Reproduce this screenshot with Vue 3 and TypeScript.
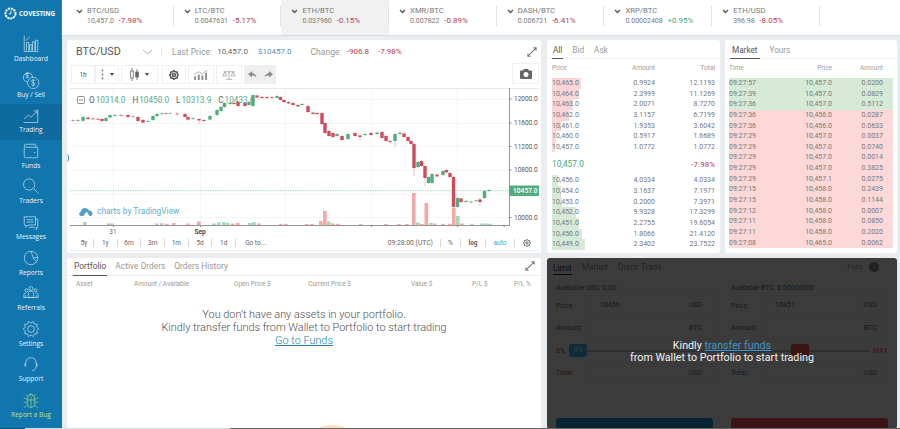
<template>
  <div class="app">
    <aside class="sidebar">
      <div class="logo">
        <svg width="13" height="13" viewBox="0 0 16 16" fill="none" stroke="#fff">
          <circle cx="8" cy="8" r="6.2" stroke-width="2.4" stroke-dasharray="2.6 1" />
          <path d="M8.6 4.8v3.6H5.8" stroke-width="1.1" />
        </svg>
        <span>COVESTING</span>
      </div>
      <a v-for="item in nav" :key="item.label" class="nav-item" :class="{ active: item.active, bug: item.bug }">
        <svg width="18" height="18" viewBox="0 0 24 24" fill="none" stroke="currentColor" stroke-width=".8">
          <path :d="item.d" />
        </svg>
        <span>{{ item.label }}</span>
      </a>
    </aside>

    <div class="main">
      <header class="tickers">
        <div v-for="t in tickers" :key="t.pair" class="ticker" :class="{ current: t.current }">
          <svg class="chev" width="7" height="5" viewBox="0 0 7 5" fill="none" stroke="#555" stroke-width="1.3">
            <path d="M1 1l2.5 2.5L6 1" />
          </svg>
          <div>
            <div class="pair">{{ t.pair }}</div>
            <div class="quote">
              {{ t.price }} <b :class="t.change.startsWith('+') ? 'up' : 'down'">{{ t.change }}</b>
            </div>
          </div>
        </div>
      </header>

      <div class="board">
        <section class="card chart-card">
          <div class="chart-head">
            <span class="symbol">BTC/USD</span>
            <svg width="11" height="6" viewBox="0 0 11 6" fill="none" stroke="#aaa" stroke-width=".9"><path d="M1 1l4.5 4L10 1" /></svg>
            <i class="head-sep"></i>
            <span class="muted">Last Price:</span>
            <span class="val">10,457.0</span>
            <span class="blue">$10457.0</span>
            <span class="muted change">Change:</span>
            <span class="down">-906.8</span>
            <span class="down pct">-7.98%</span>
            <svg class="expand" width="12" height="12" viewBox="0 0 13 13" fill="none" stroke="#777" stroke-width="1.1">
              <path d="M2 11L11 2M8 2h3v3M2 8v3h3" />
            </svg>
          </div>

          <div class="tools">
            <div class="tool t-1h">1h</div>
            <div class="tool t-more">
              <svg width="3" height="11" viewBox="0 0 3 11" fill="#777"><circle cx="1.5" cy="1.5" r=".9" /><circle cx="1.5" cy="5.5" r=".9" /><circle cx="1.5" cy="9.5" r=".9" /></svg>
              <i class="caret"></i>
            </div>
            <div class="tool t-candle">
              <svg width="9" height="13" viewBox="0 0 9 13" fill="none" stroke="#666" stroke-width=".8">
                <path d="M2 0v13M7 1v11" /><rect x=".7" y="3" width="2.6" height="7" fill="#fff" /><rect x="5.7" y="4" width="2.6" height="5" fill="#666" />
              </svg>
              <i class="caret"></i>
            </div>
            <div class="tool t-gear">
              <svg width="10" height="10" viewBox="0 0 24 24" fill="none" stroke="#555"><path :d="toolGear" stroke-width="3.6" /></svg>
            </div>
            <div class="tool t-ind">
              <svg width="15" height="10" viewBox="0 0 16 11" fill="#8a8a8a">
                <rect x="0" y="7" width="2" height="4" /><rect x="4" y="5" width="2" height="6" /><rect x="8" y="6" width="2" height="5" /><rect x="12" y="3" width="2" height="8" />
                <path d="M0 5l5-3 4 2 6-4" fill="none" stroke="#8a8a8a" stroke-width=".7" />
              </svg>
            </div>
            <div class="tool t-scale">
              <svg width="14" height="10" viewBox="0 0 15 11" fill="none" stroke="#8a8a8a" stroke-width=".7">
                <path d="M7.5 1v9M4 10.3h7M1.5 2h12M3 2L.8 6.5h4.4zM12 2L9.8 6.5h4.400z" />
              </svg>
            </div>
            <div class="tool-pair">
              <svg width="9" height="7" viewBox="0 0 9 7" fill="#8c8c8c"><path d="M4 0L0 3.2 4 6.4V4.500c2 0 3.400.6 4.500 2C8 3.800 6.500 2.200 4 1.900z" /></svg>
              <svg width="9" height="7" viewBox="0 0 9 7" fill="#8c8c8c"><path d="M5 0l4 3.200L5 6.400V4.500c-2 0-3.400.6-4.500 2C1 3.800 2.500 2.200 5 1.900z" /></svg>
            </div>
            <div class="tool t-cam">
              <svg width="12" height="10" viewBox="0 0 12 10" fill="#666">
                <path fill-rule="evenodd" d="M4 0h4l1 1.500h2a1 1 0 0 1 1 1V9a1 1 0 0 1-1 1H1a1 1 0 0 1-1-1V2.500a1 1 0 0 1 1-1h2zM6 3a2.500 2.500 0 1 0 0 5 2.500 2.500 0 0 0 0-5z" />
              </svg>
            </div>
          </div>

          <div class="plot">
            <svg width="470" height="148" viewBox="70 88 470 148">
              <g stroke="#f3f5f6" stroke-width="1">
                <path v-for="x in gridX" :key="x" :d="`M${x} 88V225`" />
                <path v-for="y in gridY" :key="y" :d="`M70 ${y}H509`" />
              </g>
              <path d="M70 88.500H539" stroke="#e6e9eb" />
              <rect
                v-for="b in volumes"
                :key="b[0]"
                :x="b[0]"
                :y="225 - b[1]"
                width="3.6"
                :height="b[1]"
                :fill="b[2] ? '#a5d8bb' : '#f5a6a6'"
              />
              <path d="M70 190.700H509" stroke="#8fcfb1" stroke-width=".8" stroke-dasharray="1.5 1" />
              <g v-for="c in candles" :key="c[0]">
                <path :d="`M${c[0]} ${c[4] ?? c[1] - 1}V${c[5] ?? c[2] + 1}`" :stroke="c[3] ? '#8ecbaa' : '#e4a0a8'" stroke-width=".7" />
                <rect :x="c[0] - 1.7" :y="c[1]" width="3.4" :height="c[2] - c[1]" :fill="c[3] ? '#53ab7e' : '#cf4b5d'" />
              </g>
              <path d="M70 225.500H509M509.500 88V226" stroke="#8a8a8a" stroke-width=".9" />
              <path v-for="x in tickX" :key="x" :d="`M${x} 225v2`" stroke="#777" stroke-width=".8" />
              <g class="axis">
                <g v-for="a in axis" :key="a.label">
                  <path :d="`M509 ${a.y}h2.500`" stroke="#777" stroke-width=".8" />
                  <text x="514" :y="a.y + 2.4">{{ a.label }}</text>
                </g>
              </g>
              <rect x="509" y="185.500" width="30" height="10.5" fill="#53ab7e" />
              <text class="last" x="513" y="193.200">10457.0</text>
              <text class="date" x="113" y="233.500" text-anchor="middle">31</text>
              <text class="date strong" x="200" y="233.500" text-anchor="middle">Sep</text>
            </svg>
            <div class="legend">
              <svg width="8" height="8" viewBox="0 0 8 8" fill="none" stroke="#777" stroke-width=".8"><rect x=".5" y=".5" width="7" height="7" rx="1" /><path d="M2 4h4" /></svg>
              <span class="l-key">O</span><span class="up">10314.0</span>
              <span class="l-key">H</span><span class="up">10450.0</span>
              <span class="l-key">L</span><span class="up">10313.9</span>
              <span class="l-key">C</span><span class="up">10433.6</span>
            </div>
            <div class="brand">
              <svg width="14" height="9" viewBox="0 0 14 9" fill="#4aa3c7">
                <path d="M2 9a2 2 0 0 1-.4-3.900C2 2.500 4 1 6 1c1.800 0 3.300 1 4 2.500A3 3 0 0 1 12 9h-1.500L7.500 4.500 4.500 9z" />
              </svg>
              <span>charts by TradingView</span>
            </div>
            <svg class="nudge" width="3" height="8" viewBox="0 0 3 8" fill="none" stroke="#3d8fc0"><path d="M.5 .5C2 2 2 6 .5 7.5" /></svg>
          </div>

          <div class="range">
            <span v-for="r in ranges" :key="r" class="r-btn">{{ r }}</span>
            <span class="r-go">Go to...</span>
            <span class="r-right">
              <span class="r-time">09:28:00 (UTC)</span>
              <span class="r-opt">%</span>
              <span class="r-opt strong">log</span>
              <span class="r-opt auto">auto</span>
              <span class="r-opt last-opt">
                <svg width="8" height="8" viewBox="0 0 24 24" fill="none" stroke="#666"><path :d="toolGear" stroke-width="3" /></svg>
              </span>
            </span>
          </div>
        </section>

        <div class="right-top">
          <section class="card book">
            <div class="tabs">
              <span class="tab on">All</span><span class="tab">Bid</span><span class="tab">Ask</span>
            </div>
            <div class="book-row head"><span>Price</span><span>Amount</span><span>Total</span></div>
            <div v-for="r in asks" :key="r[0]" class="book-row">
              <i class="depth red" :style="{ width: r[3] + 'px' }"></i>
              <span>{{ r[0] }}</span><span>{{ r[1] }}</span><span>{{ r[2] }}</span>
            </div>
            <div class="book-mid"><span class="up">10,457.0</span><span class="down">-7.98%</span></div>
            <div v-for="r in bids" :key="r[0]" class="book-row">
              <i class="depth green" :style="{ width: r[3] + 'px' }"></i>
              <span>{{ r[0] }}</span><span>{{ r[1] }}</span><span>{{ r[2] }}</span>
            </div>
          </section>

          <section class="card market">
            <div class="tabs">
              <span class="tab on">Market</span><span class="tab">Yours</span>
            </div>
            <div class="trade-row head"><span>Time</span><span>Price</span><span>Amount</span></div>
            <div v-for="(t, i) in trades" :key="i" class="trade-row" :class="i < 3 ? 'buy' : 'sell'">
              <span>{{ t[0] }}</span><span>{{ t[1] }}</span><span>{{ t[2] }}</span>
            </div>
          </section>
        </div>

        <section class="card portfolio">
          <div class="tabs port-tabs">
            <span class="tab on">Portfolio</span><span class="tab">Active Orders</span><span class="tab">Orders History</span>
            <svg class="expand" width="12" height="12" viewBox="0 0 13 13" fill="none" stroke="#777" stroke-width="1.1">
              <path d="M2 11L11 2M8 2h3v3M2 8v3h3" />
            </svg>
          </div>
          <div class="port-head">
            <span v-for="c in portCols" :key="c.label" :style="{ width: c.w + 'px' }">{{ c.label }}</span>
          </div>
          <div class="empty">
            You don’t have any assets in your portfolio.<br />
            Kindly transfer funds from Wallet to Portfolio to start trading<br />
            <a>Go to Funds</a>
          </div>
          <i class="glow"></i>
        </section>

        <section class="trade">
          <div class="trade-tabs">
            <span class="on">Limit</span><span>Market</span><span>Quick Trade</span>
            <span class="fees">Fees</span><i class="info">i</i>
          </div>
          <div class="forms">
            <div v-for="f in forms" :key="f.avail" class="form">
              <div class="avail">{{ f.avail }}</div>
              <div class="field"><label>Price:</label><div class="box"><span>{{ f.price }}</span><span>USD</span></div></div>
              <div class="field"><label>Amount:</label><div class="box"><span></span><span>BTC</span></div></div>
              <div class="slide" :class="f.cls">
                <template v-if="f.cls === 'l'"><label>0%</label><b class="pill">0%</b><i class="rail"></i></template>
                <template v-else><i class="rail"></i><b class="pill red-pill"></b><i class="rail"></i><em>MAX</em></template>
              </div>
              <div class="field"><label>Total:</label><div class="box"><span></span><span>USD</span></div></div>
              <div class="act" :class="f.cls">{{ f.act }}</div>
            </div>
          </div>
          <div class="veil">
            <p>Kindly <a>transfer funds</a><br />from Wallet to Portfolio to start trading</p>
          </div>
        </section>
      </div>
    </div>
    <div class="bottom-edge"><i class="e1"></i><i class="e2"></i><i class="e3"></i></div>
  </div>
</template>

<script setup lang="ts">
type Candle = [number, number, number, number, number?, number?]

// scalloped gear outline, used by the sidebar and the small tool buttons
const gear = (teeth: number, r1: number, r2: number, inner: number) => {
  let d = ''
  const n = teeth * 2
  for (let i = 0; i <= n; i++) {
    const a = (i / n) * Math.PI * 2
    const r = i % 2 ? r1 : r2
    const x = (12 + r * Math.cos(a)).toFixed(2)
    const y = (12 + r * Math.sin(a)).toFixed(2)
    d += i === 0 ? `M${x} ${y}` : `L${x} ${y}`
  }
  return `${d}M${12 + inner} 12a${inner} ${inner} 0 1 0 -${inner * 2} 0a${inner} ${inner} 0 1 0 ${inner * 2} 0`
}

const toolGear = gear(8, 8.5, 10.5, 3.5)

const nav = [
  { label: 'Dashboard', d: 'M3 1v21h19M6 21V10h3v11M10 21V13h3v8M14 21V9h3v12M18 21V7h3v14M5 7c3-1 4-4 5-5' },
  { label: 'Buy / Sell', d: 'M14 8.5a6 6 0 1 0-7 6M15 8.5a7.5 7.5 0 1 0 .01 0M17.5 13c-1-1.5-5-1.5-5 .7s5 1.3 5 3.6-4 2-5 .7M15 11v10M9 3.5c-1-1-4-1-4 .8s4 1 4 3-3 1.7-4 .7M7 2v8' },
  { label: 'Trading', d: 'M2 22h19M21 4v18M3 17l6-5 3 3 8-8M15.5 6.500H20V11', active: true },
  { label: 'Funds', d: 'M3 7v12a2 2 0 0 0 2 2h15a1 1 0 0 0 1-1V8a1 1 0 0 0-1-1H5a2 2 0 0 1-2-2 2 2 0 0 1 2-2h12.5l1.5 4M16 14h2' },
  { label: 'Traders', d: 'M17 10a7.5 7.5 0 1 1-15 0 7.5 7.5 0 0 1 15 0M15.5 15.5L22 22' },
  { label: 'Messages', d: 'M3 5h15v11H8l-3 3v-3H3zM6 9h9M6 12h9M18 8h3v11h-1.5v3l-3-3H9' },
  { label: 'Reports', d: 'M21 12a9 9 0 1 1-18 0 9 9 0 0 1 18 0M12 3l3 9 4.5 5M15 12l6-1' },
  { label: 'Referrals', d: 'M14.5 6a2.5 2.5 0 1 1-5 0 2.5 2.5 0 0 1 5 0M8 8.5a2 2 0 1 1-4 0 2 2 0 0 1 4 0M20 8.5a2 2 0 1 1-4 0 2 2 0 0 1 4 0M8.5 18v-5c0-2 1.5-3.5 3.5-3.5s3.5 1.5 3.5 3.5v5zM2.5 18v-3c0-2 1-3 3-3M21.5 18v-3c0-2-1-3-3-3M5 18v-3M19 18v-3M2 18h20' },
  { label: 'Settings', d: gear(10, 8, 10.5, 4.5) },
  { label: 'Support', d: 'M5 15v-4.5a7 7 0 0 1 14 0V15M5 11c-2 .5-2 4 0 4.500M19 11c2 .5 2 4 0 4.500M19 15.500c0 3-3 5.500-6 5.500' },
  { label: 'Report a Bug', d: 'M7 12a5 7 0 0 1 10 0v5a5 5 0 0 1-10 0zM12 8v14M8 7.5l-2-3M16 7.5l2-3M9.5 6.5a2.5 2.5 0 0 1 5 0M7 11L2 9M17 11l5-2M7 15H2M17 15h5M7.5 19L3 22M16.5 19l4.5 3M7 12h10', bug: true }
]

const tickers = [
  { pair: 'BTC/USD', price: '10,457.0', change: '-7.98%' },
  { pair: 'LTC/BTC', price: '0.0047631', change: '-5.17%' },
  { pair: 'ETH/BTC', price: '0.037960', change: '-0.15%', current: true },
  { pair: 'XMR/BTC', price: '0.007822', change: '-0.89%' },
  { pair: 'DASH/BTC', price: '0.006721', change: '-6.41%' },
  { pair: 'XRP/BTC', price: '0.00002408', change: '+0.95%' },
  { pair: 'ETH/USD', price: '396.98', change: '-8.05%' }
]

const gridX = [113.5, 200.5, 285.5, 371.5, 457.5]
const gridY = [99.5, 123.5, 146.5, 170.5, 194.5, 217.5]
const tickX = [113.5, 200.5, 371.5, 457.5, 504]
const axis = [
  { label: '12000.0', y: 99 },
  { label: '11600.0', y: 123 },
  { label: '11200.0', y: 146.5 },
  { label: '10800.0', y: 170 },
  { label: '10000.0', y: 217.5 }
]

// [x, top, bottom, isUp, wickTop?, wickBottom?], in page pixels
const candles: Candle[] = [
  [73, 120, 120.6, 0], [78, 120, 120.8, 1], [83, 117, 120.8, 1], [88, 117.6, 119, 0], [93, 118.5, 119.2, 0],
  [98, 118.8, 119.6, 0], [102, 119, 121, 0], [106, 118, 121, 1], [110, 115, 117.5, 1], [115, 115, 115.8, 1],
  [121, 115, 115.7, 0], [128, 115, 117, 0], [133, 116.4, 117, 1], [138, 117, 121, 0], [143, 120, 122.6, 0],
  [148, 121, 121.8, 1], [153, 116, 120, 1], [157, 114, 116, 1], [162, 113.4, 114.2, 1], [166, 113, 113.7, 0],
  [170, 113, 113.6, 1], [177, 113.6, 114.4, 0], [185, 114, 117, 0], [188, 117, 119.6, 0], [193, 118.2, 119, 1],
  [199, 119, 120.4, 0, 118, 124], [204, 120, 121, 0], [210, 116, 119.6, 1], [217, 110, 115, 1], [221, 107, 111, 1],
  [224.5, 103, 107, 1], [230, 103, 104, 1], [234, 103, 104, 0], [238, 102, 106, 0], [245, 103, 106, 0],
  [249, 102, 105, 1], [253, 95, 106, 1, 95, 107], [257, 95.5, 97.5, 0], [262, 97, 98, 0], [267, 97, 98, 0],
  [272, 97, 97.8, 0], [277, 96, 97.8, 1], [280.5, 97, 100, 0], [284, 100, 102, 0], [288.5, 102, 103.4, 0],
  [293, 103, 105, 0], [298, 105, 106.4, 0], [302, 104, 105, 1], [308, 106, 112, 0], [313, 112.6, 114, 0],
  [317, 113, 114, 0], [322, 113, 124, 0], [325, 123, 133, 0], [329, 131, 136, 0], [333, 133, 137, 0],
  [337, 134, 136, 1], [342, 136, 140, 0, 135, 141], [348, 134, 139, 1], [355, 133, 136, 0], [360, 135.5, 137, 0, 134, 140],
  [365, 134, 135, 1], [371, 133, 135, 0], [377, 132.6, 134, 1], [382, 132, 138, 0], [386, 136, 141, 0],
  [390, 141, 142, 0, 140, 144], [395, 134, 141, 1, 133, 147], [400, 132.8, 134, 1], [404, 133.5, 137, 0], [408, 137, 141, 0],
  [411, 141, 144, 0], [414, 144, 168, 0, 143, 176], [418, 162, 167, 1], [421.5, 161, 166, 0], [425, 166, 178, 0, 165, 186],
  [428.5, 177, 183, 1], [432, 174, 183, 1], [437, 174.6, 176.4, 0], [443, 171, 175, 1], [446.5, 170, 172.4, 0],
  [450, 173, 177, 0], [453.5, 177, 207, 0], [457.5, 198, 207, 1], [461, 198.5, 202, 0], [466, 201, 202, 1],
  [471, 201.6, 202.4, 1], [476, 200.4, 201.2, 1], [480, 199.5, 202, 0, 198, 206], [484.5, 191, 198, 1], [489, 190, 191, 1]
]

// [x, height, isUp]
const volumes: [number, number, number][] = [
  [83, 3, 1], [107, 1.5, 0], [110, 1.5, 1], [155, 1.5, 1], [160, 1.8, 1], [165, 1.2, 0], [172, 2, 0], [186, 1.5, 0], [197, 3.5, 0],
  [212, 1.5, 1], [217, 2.5, 1], [222, 3, 1], [226, 2, 1], [231, 1.5, 0], [236, 2, 0], [248, 2, 1], [252, 3, 1], [257, 1.5, 0],
  [279, 1.2, 0], [284, 1.2, 0], [305, 1, 0], [310, 1, 0], [319, 4, 0], [323, 14, 0], [327, 3.5, 1], [331, 1.5, 0], [336, 1.2, 0], [359, 1, 1],
  [384, 1, 0], [397, 1, 0], [405, 1, 0], [412, 32, 0], [416, 2.5, 1], [420, 1, 0], [424.5, 22, 0], [429, 2, 1], [433, 1.5, 0], [441, 1.2, 0],
  [448, 1.2, 0], [452, 17, 0], [456, 9, 1], [460, 1.5, 0], [470, 1.2, 1], [480, 1.5, 1], [484, 1.5, 1], [488, 1.2, 1]
]

const ranges = ['5y', '1y', '6m', '3m', '1m', '5d', '1d']

const asks: [string, string, string, number][] = [
  ['10,465.0', '0.9924', '12.1193', 29],
  ['10,464.0', '2.3999', '11.1269', 27],
  ['10,463.0', '2.0071', '8.7270', 21],
  ['10,462.0', '3.1157', '6.7199', 17],
  ['10,461.0', '1.9353', '3.6042', 9],
  ['10,460.0', '0.5917', '1.6689', 4],
  ['10,457.0', '1.0772', '1.0772', 3]
]

const bids: [string, string, string, number][] = [
  ['10,456.0', '4.0334', '4.0334', 6],
  ['10,454.0', '3.1637', '7.1971', 9],
  ['10,453.0', '0.2000', '7.3971', 10],
  ['10,452.0', '9.9328', '17.3299', 24],
  ['10,451.0', '2.2755', '19.6054', 27],
  ['10,450.0', '1.8066', '21.4120', 30],
  ['10,449.0', '2.3402', '23.7522', 33]
]

const trades = [
  ['09:27:57', '10,457.0', '0.0200'],
  ['09:27:39', '10,457.0', '0.0829'],
  ['09:27:36', '10,457.0', '0.5112'],
  ['09:27:36', '10,456.0', '0.0287'],
  ['09:27:36', '10,456.0', '0.0633'],
  ['09:27:29', '10,457.0', '0.0037'],
  ['09:27:29', '10,457.0', '0.0740'],
  ['09:27:29', '10,457.0', '0.0014'],
  ['09:27:29', '10,457.0', '0.3825'],
  ['09:27:29', '10,457.1', '0.0275'],
  ['09:27:15', '10,458.0', '0.2439'],
  ['09:27:15', '10,458.0', '0.1144'],
  ['09:27:12', '10,458.0', '0.0007'],
  ['09:27:11', '10,458.0', '0.0850'],
  ['09:27:11', '10,458.0', '0.2020'],
  ['09:27:08', '10,465.0', '0.0062']
]

const portCols = [
  { label: 'Asset', w: 58 },
  { label: 'Amount / Available', w: 100 },
  { label: 'Open Price $', w: 74 },
  { label: 'Current Price $', w: 103 },
  { label: 'Value $', w: 61 },
  { label: 'P/L $', w: 42 },
  { label: 'P/L %', w: 20 }
]

const forms = [
  { avail: 'Available USD: 0.00', price: '10456', cls: 'l', act: 'Buy BTC' },
  { avail: 'Available BTC: 0.00000000', price: '10457', cls: 'r', act: 'Sell BTC' }
]
</script>

<style>
html,
body {
  margin: 0;
  background: #fff;
}
</style>

<style scoped>
.app {
  position: relative;
  display: flex;
  width: 900px;
  height: 429px;
  overflow: hidden;
  font-family: Roboto, "Liberation Sans", sans-serif;
  color: #666;
  background: #e9edf0;
}

.sidebar {
  width: 62px;
  flex: none;
  background: #1176ae;
  color: #e6f2f9;
}

.logo {
  display: flex;
  align-items: center;
  height: 33px;
  padding: 0 0 7px 4px;
  box-sizing: border-box;
  gap: 2px;
  color: #fff;
  font: 700 6.4px "Open Sans", sans-serif;
}

.nav-item {
  display: flex;
  flex-direction: column;
  align-items: center;
  justify-content: flex-start;
  height: 35.6px;
  padding-top: 2px;
  box-sizing: border-box;
  font: 400 6.6px/9px "Open Sans", sans-serif;
  gap: 1px;
}

.nav-item.active {
  background: #0f6a9f;
}

.nav-item.bug {
  color: #b6e878;
}

.main {
  flex: 1;
  min-width: 0;
}

.tickers {
  display: flex;
  height: 35px;
  padding-left: 4px;
  background: #fff;
  box-shadow: 0 1px 1px #d9dde0;
  position: relative;
}

.ticker {
  display: flex;
  width: 107.7px;
  height: 35px;
  box-sizing: border-box;
  padding: 6px 0 0 10px;
  gap: 4px;
  font-size: 7px;
  line-height: 10px;
  position: relative;
}

.ticker::after {
  content: "";
  position: absolute;
  right: 0;
  top: 6px;
  height: 20px;
  border-right: 1px solid #e3e3e3;
}

.ticker.current {
  background: #f1f1f1;
}

.chev {
  margin-top: 3px;
}

.pair {
  font-size: 7.7px;
  color: #777;
}

.quote {
  color: #777;
  white-space: nowrap;
}

.quote b {
  font-size: 8px;
  font-weight: 400;
  margin-left: 3px;
}

.up {
  color: #4aa578;
}

.down {
  color: #b73a55;
}

.board {
  display: grid;
  grid-template-columns: 474px 350px;
  grid-template-rows: 213px 171px;
  column-gap: 6px;
  row-gap: 5px;
  padding: 5px 0 0 5px;
}

.card {
  background: #fff;
  border-radius: 3px;
  min-width: 0;
  overflow: hidden;
}

.chart-card {
  display: flex;
  flex-direction: column;
  padding: 0 2px 0 3px;
  box-sizing: border-box;
}

.chart-head {
  display: flex;
  align-items: center;
  height: 23px;
  padding-left: 6px;
  font-size: 8px;
  white-space: nowrap;
}

.symbol {
  font-size: 10.8px;
  color: #555;
  width: 66px;
}

.head-sep {
  height: 10px;
  border-left: 1px solid #e5e5e5;
  margin: 0 10px 0 8px;
}

.muted {
  color: #999;
  font-size: 8.6px;
}

.val {
  color: #666;
  margin-left: 5px;
}

.blue {
  color: #4c93bd;
  margin-left: 10px;
}

.change {
  margin-left: 19px;
}

.chart-head .down {
  margin-left: 5px;
}

.chart-head .pct {
  margin-left: 9px;
}

.expand {
  margin-left: auto;
}

.chart-head .expand {
  margin-right: 1px;
}

.tools {
  display: flex;
  height: 20px;
  padding-top: 2px;
}

.tool {
  display: flex;
  align-items: center;
  justify-content: center;
  box-sizing: border-box;
  height: 19px;
  border: 1px solid #f0f0f0;
  color: #555;
  font-size: 6.5px;
  gap: 6px;
}

.t-1h {
  width: 24px;
  margin-left: 1px;
}

.t-more {
  width: 24px;
  margin-right: 2px;
}

.t-candle {
  width: 37px;
  margin-right: 4px;
}

.t-gear {
  width: 24px;
  margin-right: 2px;
}

.t-ind {
  width: 26px;
  margin-right: 2px;
}

.t-scale {
  width: 26px;
  margin-right: 2px;
}

.tool-pair {
  display: flex;
  align-items: center;
  justify-content: space-around;
  width: 32px;
  height: 19px;
  background: #efefef;
}

.t-cam {
  width: 27px;
  margin-left: auto;
  margin-top: -2px;
  height: 21px;
}

.caret {
  width: 0;
  height: 0;
  border: 2.5px solid transparent;
  border-top: 3px solid #444;
  border-bottom: 0;
}

.plot {
  position: relative;
  height: 148px;
  margin-top: 3px;
}

.plot > svg:first-child {
  display: block;
}

.axis text {
  font-size: 6.5px;
  fill: #555;
}

.last {
  font-size: 6.7px;
  font-weight: 500;
  fill: #fff;
}

.date {
  font-size: 6.5px;
  fill: #666;
}

.date.strong {
  font-weight: 700;
  fill: #444;
}

.legend {
  position: absolute;
  left: 7px;
  top: 7px;
  display: flex;
  align-items: center;
  font-size: 8.2px;
  line-height: 10px;
  white-space: nowrap;
}

.legend svg {
  margin-right: 4px;
}

.legend .up {
  color: #5aaa88;
  margin-right: 7px;
}

.l-key {
  color: #666;
  margin-right: 1px;
}

.brand {
  position: absolute;
  left: 9px;
  top: 118px;
  display: flex;
  align-items: center;
  gap: 4px;
  color: #62afcc;
  font-size: 8.4px;
}

.nudge {
  position: absolute;
  left: -3px;
  top: 66px;
}

.range {
  display: flex;
  align-items: center;
  height: 14px;
  font-size: 6.5px;
  color: #666;
  border-bottom: 1px solid #ececec;
  white-space: nowrap;
}

.r-btn {
  box-sizing: border-box;
  width: 23.7px;
  line-height: 8px;
  text-align: center;
  border-right: 1px solid #d8d8d8;
}

.r-btn:first-child {
  width: 22px;
  margin-left: 2px;
  padding-left: 3px;
}

.r-go {
  margin-left: 9px;
}

.r-right {
  margin-left: auto;
  display: flex;
  align-items: center;
}

.r-time {
  padding-right: 7px;
  border-right: 1px solid #d8d8d8;
  line-height: 8px;
  font-size: 6.8px;
}

.r-opt {
  box-sizing: border-box;
  width: 22px;
  line-height: 8px;
  text-align: center;
  border-right: 1px solid #d8d8d8;
}

.r-opt:nth-child(2) {
  width: 20px;
}

.r-opt.strong {
  width: 25px;
  font-weight: 700;
}

.r-opt.auto {
  width: 29px;
  color: #4ca3cd;
}

.r-opt.last-opt {
  width: 24px;
  border-right: 0;
  display: flex;
  justify-content: center;
}

.right-top {
  display: flex;
  gap: 5px;
}

.tabs {
  display: flex;
  align-items: flex-end;
  height: 18px;
  font-size: 8.2px;
  color: #999;
  border-bottom: 1px solid #f1f1f1;
  gap: 8px;
  padding-left: 5px;
}

.tab {
  padding: 0 1px 3px;
  line-height: 10px;
}

.tab.on {
  color: #555;
  border-bottom: 1px solid #555;
  margin-bottom: -1px;
}

.book {
  width: 173px;
  flex: none;
  padding-bottom: 4px;
}

.book-row,
.trade-row {
  position: relative;
  display: grid;
  height: 10.65px;
  line-height: 10.65px;
  font-size: 7px;
  color: #777;
}

.book-row {
  grid-template-columns: 40px 63px 60px;
  margin-left: 5px;
}

.book-row span {
  position: relative;
  text-align: right;
}

.book-row span:first-of-type {
  text-align: left;
}

.book-row.head,
.trade-row.head {
  height: 19px;
  line-height: 18px;
  font-size: 6.5px;
  color: #a0a0a0;
}

.depth {
  position: absolute;
  left: 0;
  top: 0;
  bottom: 0;
}

.depth.red {
  background: #fcd6d6;
}

.depth.green {
  background: #d6ead7;
}

.book-mid {
  display: flex;
  justify-content: space-between;
  align-items: center;
  height: 22px;
  padding: 0 5px;
  width: 163px;
  box-sizing: border-box;
  margin-left: 5px;
  padding: 0;
  font-size: 8px;
  margin-top: 1px;
}

.book-mid .up {
  font-size: 8.3px;
}

.market {
  width: 172px;
  flex: none;
}

.market .tabs {
  padding-left: 5px;
  gap: 7px;
}

.market .tab {
  padding-left: 2px;
  padding-right: 3px;
}

.trade-row {
  grid-template-columns: 45px 58px 51px;
  margin: 0 4px;
  padding: 0 5px 0 0;
}

.trade-row span {
  text-align: right;
}

.trade-row span:first-child {
  text-align: left;
}

.buy {
  background: #d7ead8;
}

.sell {
  background: #fdd8d8;
}

.portfolio {
  position: relative;
}

.port-tabs {
  padding-left: 6px;
  gap: 7px;
  font-size: 8.4px;
  height: 17px;
  border-bottom-color: #eee;
  align-items: flex-end;
}

.port-tabs .tab {
  padding-bottom: 4px;
}

.port-tabs .expand {
  margin: 0 5px 3px auto;
}

.port-head {
  display: flex;
  padding-left: 9px;
  height: 17px;
  line-height: 17px;
  font-size: 6.5px;
  color: #999;
  white-space: nowrap;
}

.empty {
  margin-top: 15px;
  text-align: center;
  font-size: 10.9px;
  font-weight: 300;
  line-height: 13px;
  color: #4f4f4f;
}

.empty a {
  color: #1f7fae;
  text-decoration: underline;
}

.glow {
  position: absolute;
  left: 250px;
  bottom: -6px;
  width: 30px;
  height: 10px;
  border-radius: 50%;
  background: #fde3c4;
}

.trade {
  position: relative;
  background: #fff;
  overflow: hidden;
  border-radius: 3px;
  color: #666;
  font-size: 7px;
}

.trade-tabs {
  display: flex;
  align-items: center;
  height: 17px;
  gap: 10px;
  padding: 0 8px 0 6px;
  font-size: 8.4px;
  color: #999;
}

.trade-tabs .on {
  color: #333;
  border-bottom: 1px solid #333;
  line-height: 12px;
  padding-top: 3px;
}

.fees {
  margin-left: auto;
  font-size: 7px;
}

.info {
  width: 10px;
  height: 10px;
  border-radius: 50%;
  background: #888;
  color: #fff;
  font-size: 7px;
  line-height: 10px;
  text-align: center;
  margin-left: -3px;
  margin-right: 10px;
}

.forms {
  display: flex;
  gap: 18px;
  padding: 7px 9px 0;
}

.form {
  width: 157px;
}

.avail {
  height: 12px;
  line-height: 12px;
}

.field {
  display: flex;
  align-items: center;
  height: 21.5px;
  margin-top: 1px;
}

.field label {
  width: 33px;
}

.box {
  flex: 1;
  display: flex;
  justify-content: space-between;
  height: 19px;
  line-height: 19px;
  padding: 0 10px;
  border: 1px solid #f2f2f2;
}

.slide {
  display: flex;
  align-items: center;
  height: 21.5px;
  margin-top: 1px;
}

.slide label {
  margin-right: 4px;
}

.slide.l .rail {
  margin-right: -18px;
}

.pill {
  width: 18px;
  height: 13px;
  border-radius: 3px;
  background: #3fb4ff;
  color: #fff;
  font-size: 6.5px;
  font-weight: 400;
  line-height: 13px;
  text-align: center;
}

.red-pill {
  background: #ff5a5a;
}

.rail {
  flex: 1;
  height: 2px;
  background: #ccc;
}

.slide em {
  font-style: normal;
  color: #ff5a5a;
  margin-left: 3px;
}

.act {
  margin-top: 34px;
  height: 30px;
  line-height: 30px;
  border-radius: 3px;
  text-align: center;
  color: #fff;
  background: #2398da;
}

.act.r {
  background: #ff5a5a;
}

.veil {
  position: absolute;
  inset: 0;
  background: rgba(0, 0, 0, 0.77);
  color: #f2f2f2;
  text-align: center;
}

.veil p {
  margin: 82px 0 0;
  font-size: 10.7px;
  line-height: 12.3px;
}

.veil a {
  color: #3f93cc;
  text-decoration: underline;
}

.bottom-edge {
  position: absolute;
  left: 0;
  right: 0;
  bottom: 0;
  display: flex;
  height: 1px;
}

.e1 {
  width: 25px;
  background: #0c4a6e;
}

.e2 {
  width: 205px;
  background: #d8dcdf;
}

.e3 {
  flex: 1;
  background: #666;
}
</style>
